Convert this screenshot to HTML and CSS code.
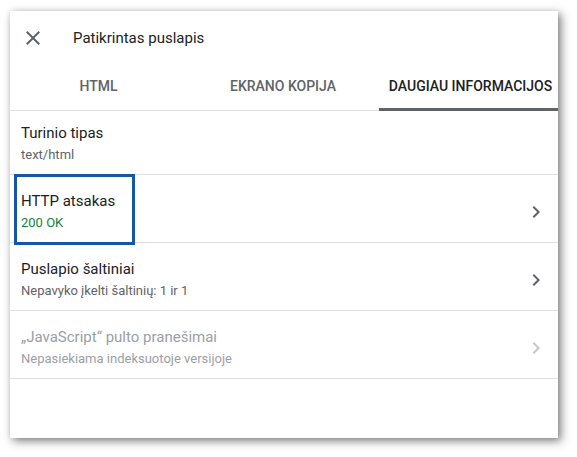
FILE: index.html
```html
<!DOCTYPE html>
<html lang="lt">
<head>
  <meta charset="UTF-8" />
  <meta name="viewport" content="width=device-width, initial-scale=1" />
  <title>Patikrintas puslapis</title>
  <link rel="stylesheet" href="styles.css">
</head>
<body>
<div class="panel">
  <header class="panel-header">
    <svg class="close-icon" viewBox="0 0 24 24" width="24" height="24">
      <path d="M19 6.41L17.59 5 12 10.59 6.41 5 5 6.41 10.59 12 5 17.59 6.41 19 12 13.41 17.59 19 19 17.59 13.41 12z" />
    </svg>
    <span class="panel-title">Patikrintas puslapis</span>
  </header>

  <nav class="tabs">
    <div class="tab">HTML</div>
    <div class="tab">Ekrano kopija</div>
    <div class="tab active">Daugiau informacijos</div>
  </nav>

  <div class="row first">
    <div class="row-text">
      <div class="row-title">Turinio tipas</div>
      <div class="row-sub">text/html</div>
    </div>
  </div>

  <div class="row">
    <div class="highlight"></div>
    <div class="row-text">
      <div class="row-title">HTTP atsakas</div>
      <div class="row-sub ok">200 OK</div>
    </div>
    <svg class="chevron" viewBox="0 0 24 24" width="24" height="24">
      <path d="M10 6L8.59 7.41 13.17 12l-4.58 4.59L10 18l6-6z" />
    </svg>
  </div>

  <div class="row">
    <div class="row-text">
      <div class="row-title">Puslapio šaltiniai</div>
      <div class="row-sub">Nepavyko įkelti šaltinių: 1 ir 1</div>
    </div>
    <svg class="chevron" viewBox="0 0 24 24" width="24" height="24">
      <path d="M10 6L8.59 7.41 13.17 12l-4.58 4.59L10 18l6-6z" />
    </svg>
  </div>

  <div class="row disabled">
    <div class="row-text">
      <div class="row-title">„JavaScript“ pulto pranešimai</div>
      <div class="row-sub">Nepasiekiama indeksuotoje versijoje</div>
    </div>
    <svg class="chevron" viewBox="0 0 24 24" width="24" height="24">
      <path d="M10 6L8.59 7.41 13.17 12l-4.58 4.59L10 18l6-6z" />
    </svg>
  </div>
</div>
</body>
</html>
```

FILE: styles.css
```css
body {
  margin: 0;
  padding: 11px 19px 19px 10px;
  background: #fff;
  font-family: Roboto, "Noto Sans", Arial, sans-serif;
  color: #202124;
}
.panel {
  width: 548px;
  height: 427px;
  background: #fff;
  box-shadow: 3px 3px 9px rgb(0 0 0 / 0.5), 0 0 5px rgb(0 0 0 / 0.08);
}
.panel-header {
  display: flex;
  align-items: center;
  padding: 15px 0 12px 11px;
  height: 24px;
}
.close-icon {
  fill: #5f6368;
  flex: none;
}
.panel-title {
  margin-left: 28px;
  font-size: 15px;
  line-height: 24px;
}
.tabs {
  display: grid;
  grid-template-columns: 177px 192px 179px;
  border-bottom: 1px solid #e0e0e0;
}
.tab {
  height: 48px;
  box-sizing: border-box;
  display: flex;
  align-items: center;
  justify-content: center;
  font-size: 14px;
  font-weight: 500;
  line-height: 20px;
  text-transform: uppercase;
  color: #5f6368;
  white-space: nowrap;
}
.tab.active {
  color: #202124;
  border-bottom: 3px solid #5f6368;
  margin-bottom: -1px;
  height: 49px;
  padding-top: 2px;
  padding-left: 4px;
}
.row {
  position: relative;
  display: flex;
  align-items: center;
  padding: 15px 10px 8px 11px;
  border-bottom: 1px solid #e0e0e0;
}
.row.first {
  padding-top: 11px;
}
.row-text {
  flex: 1;
}
.row-title {
  font-size: 15px;
  line-height: 22px;
  color: #202124;
}
.row-sub {
  font-size: 13px;
  line-height: 22px;
  color: #5f6368;
}
.row-sub.ok {
  color: #188038;
}
.chevron {
  fill: #5f6368;
  flex: none;
}
.row.disabled .row-title {
  color: #9aa0a6;
}
.row.disabled .row-sub {
  color: #9aa0a6;
}
.row.disabled .chevron {
  fill: #c4c7ca;
}
.highlight {
  position: absolute;
  left: 4px;
  top: -1px;
  width: 121px;
  height: 71px;
  box-sizing: border-box;
  border: 3px solid #1258a6;
}
```
